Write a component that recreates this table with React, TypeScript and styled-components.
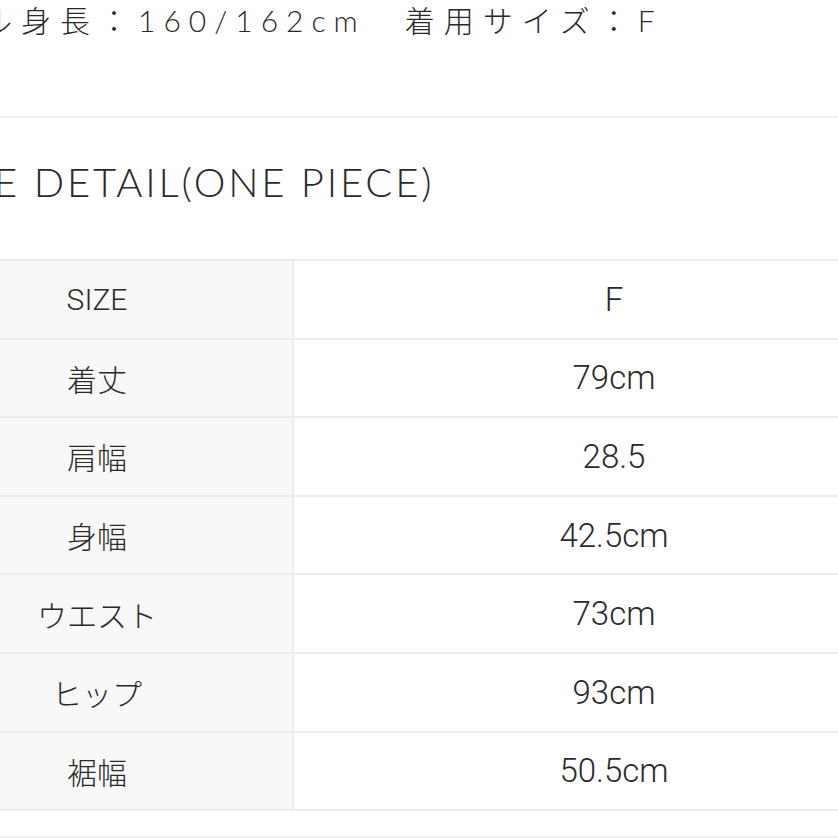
import React from "react";
import styled, { createGlobalStyle } from "styled-components";

const GlobalStyle = createGlobalStyle`
  html, body {
    margin: 0;
    padding: 0;
    background: #ffffff;
    overflow: hidden;
  }
  body {
    width: 838px;
    height: 838px;
    color: #2a2a2a;
  }
`;

const Page = styled.div`
  width: 1032px;
  margin-left: -98px;
  display: flex;
  flex-direction: column;
`;

const ModelNote = styled.p`
  margin: 0;
  padding-left: 2px;
  height: 40px;
  font-family: "Lato", "Noto Sans CJK JP", sans-serif;
  font-weight: 300;
  font-size: 30px;
  line-height: 40px;
  letter-spacing: 9px;
  white-space: nowrap;
  color: #2a2a2a;
`;

const Digits = styled.span`
  letter-spacing: 8px;
`;

const Divider = styled.hr<{ $top: number }>`
  margin: ${(p) => p.$top}px 0 0 0;
  border: none;
  height: 2px;
  background: #efefef;
  width: 100%;
`;

const Heading = styled.h2`
  margin: 39px 0 0 0;
  padding-left: 28px;
  height: 50px;
  font-family: "Lato", sans-serif;
  font-weight: 300;
  font-size: 40px;
  line-height: 50px;
  letter-spacing: 2.8px;
  white-space: nowrap;
  color: #2a2a2a;
`;

const Table = styled.table`
  margin-top: 52px;
  width: 100%;
  border-collapse: collapse;
  border-top: 2px solid #ececec;
  table-layout: fixed;
`;

const Row = styled.tr`
  border-bottom: 2px solid #ececec;
`;

const Label = styled.th`
  width: 390px;
  height: 76.6px;
  padding: 0;
  background: #f8f8f8;
  border-right: 2px solid #ececec;
  font-family: "Roboto", "Noto Sans CJK JP", sans-serif;
  font-weight: 300;
  font-size: 30px;
  color: #2a2a2a;
  text-align: center;
  vertical-align: middle;
`;

const Value = styled.td`
  height: 76.6px;
  padding: 0;
  background: #ffffff;
  font-family: "Roboto", "Noto Sans CJK JP", sans-serif;
  font-weight: 300;
  font-size: 33px;
  color: #2a2a2a;
  text-align: center;
  vertical-align: middle;
`;

const rows: [string, string][] = [
  ["SIZE", "F"],
  ["着丈", "79cm"],
  ["肩幅", "28.5"],
  ["身幅", "42.5cm"],
  ["ウエスト", "73cm"],
  ["ヒップ", "93cm"],
  ["裾幅", "50.5cm"],
];

export default function App() {
  return (
    <>
      <GlobalStyle />
      <Page>
        <ModelNote>
          モデル身長：<Digits>160/162cm</Digits>　着用サイズ：F
        </ModelNote>
        <Divider $top={76} />
        <Heading>SIZE DETAIL(ONE PIECE)</Heading>
        <Table>
          <tbody>
            {rows.map(([k, v]) => (
              <Row key={k}>
                <Label>{k}</Label>
                <Value>{v}</Value>
              </Row>
            ))}
          </tbody>
        </Table>
        <Divider $top={25} />
      </Page>
    </>
  );
}
